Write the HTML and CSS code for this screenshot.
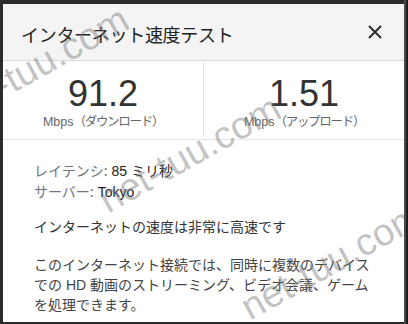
FILE: index.html
```html
<!DOCTYPE html>
<html lang="ja">
<head>
<meta charset="utf-8">
<title>インターネット速度テスト</title>
<link rel="stylesheet" href="styles.css">
</head>
<body>
<div class="frame">
  <div class="dialog">
    <header class="head">
      <h1 class="title">インターネット速度テスト</h1>
      <button class="close" aria-label="閉じる">
        <svg width="14" height="14" viewBox="0 0 14 14"><path d="M1 1L13 13M13 1L1 13" stroke="#2b2b2b" stroke-width="2" fill="none"/></svg>
      </button>
    </header>
    <section class="speeds">
      <div class="speed">
        <div class="num">91.2</div>
        <div class="unit">Mbps<span class="jp">（ダウンロード）</span></div>
      </div>
      <div class="speed">
        <div class="num">1.51</div>
        <div class="unit">Mbps<span class="jp">（アップロード）</span></div>
      </div>
    </section>
    <section class="details">
      <div class="meta"><span class="label">レイテンシ:</span> 85 ミリ秒</div>
      <div class="meta"><span class="label">サーバー:</span> Tokyo</div>
      <p class="verdict">インターネットの速度は非常に高速です</p>
      <p class="desc">このインターネット接続では、同時に複数のデバイスでの HD 動画のストリーミング、ビデオ会議、ゲームを処理できます。</p>
    </section>
    <span class="wm wm-a">net-tuu.com</span>
    <span class="wm wm-b">net-tuu.com</span>
    <span class="wm wm-c">net-tuu.com</span>
  </div>
</div>
</body>
</html>
```
FILE: styles.css
```css
html, body {
  margin: 0;
  padding: 0;
  background: #2e2e2e;
  width: 408px;
  height: 324px;
  overflow: hidden;
}
.frame {
  padding: 4px 4px 2px 3px;
  width: 408px;
  height: 324px;
  box-sizing: border-box;
  background: linear-gradient(to right, #2b2b2b 0, #2b2b2b 404px, #4a4a4a 404px, #4a4a4a 406px, #1e1e1e 406px);
}
.dialog {
  position: relative;
  width: 401px;
  height: 318px;
  background: #fff;
  overflow: hidden;
  font-family: "Liberation Sans", "Noto Sans CJK JP", sans-serif;
  color: #222;
}
.head {
  height: 57px;
  background: #f4f4f4;
  border-bottom: 1px solid #dadada;
  display: flex;
  align-items: center;
  justify-content: space-between;
  padding: 3px 22px 0 18px;
  box-sizing: border-box;
}
.title {
  margin: 0;
  font-family: "Noto Sans CJK JP", sans-serif;
  font-weight: 400;
  font-size: 18px;
  line-height: 24px;
  color: #222;
  letter-spacing: -0.3px;
}
.close {
  border: 0;
  background: none;
  padding: 0;
  width: 14px;
  height: 14px;
  display: block;
  margin-top: -3px;
}
.close svg { display: block; }
.speeds {
  display: grid;
  grid-template-columns: 201px 200px;
  height: 78px;
  border-bottom: 1px solid #e6e6e6;
}
.speed {
  display: flex;
  flex-direction: column;
  align-items: center;
  padding-top: 13px;
}
.speed:first-child {
  border-right: 1px solid #e6e6e6;
  margin-bottom: 2px;
}
.num {
  font-family: "Liberation Sans", sans-serif;
  font-size: 36px;
  line-height: 40px;
  color: #333;
}
.unit {
  font-size: 12.5px;
  line-height: 16px;
  color: #666;
  margin-top: -1px;
}
.unit .jp {
  font-family: "Noto Sans CJK JP", sans-serif;
  letter-spacing: -1.3px;
}
.details {
  padding: 20px 20px 0 31px;
  font-family: "Liberation Sans", "Noto Sans CJK JP", sans-serif;
  font-size: 14px;
  line-height: 20px;
}
.meta { color: #222; }
.label {
  font-family: "Noto Sans CJK JP", sans-serif;
  color: #70757a;
}
.verdict {
  margin: 14px 0 0;
  color: #333;
  font-family: "Noto Sans CJK JP", sans-serif;
}
.desc {
  margin: 19px 0 0;
  color: #444;
  font-family: "Liberation Sans", "Noto Sans CJK JP", sans-serif;
  width: 340px;
}
.wm {
  position: absolute;
  font-family: "Liberation Sans", sans-serif;
  font-size: 38px;
  line-height: 38px;
  color: rgba(120, 120, 120, 0.45);
  transform: rotate(-29deg);
  transform-origin: 0 100%;
  white-space: nowrap;
  pointer-events: none;
}
.wm-a { left: 108px; top: 177px; }
.wm-b { left: 250px; top: 284px; }
.wm-c { left: -44px; top: 88px; }
```
